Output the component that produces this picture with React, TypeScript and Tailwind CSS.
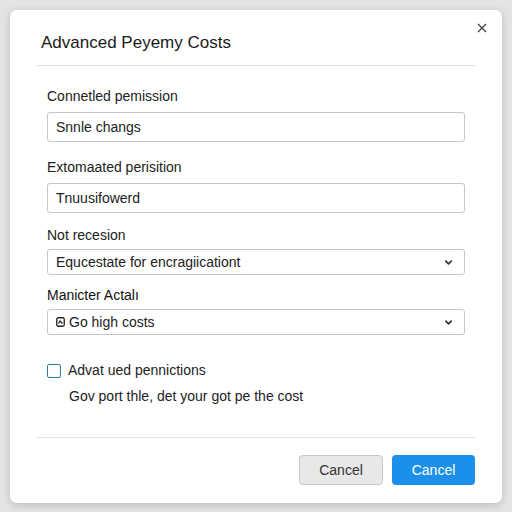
import { ChevronDown } from 'lucide-react'

function Label({ children, strong }: { children: string; strong?: boolean }) {
  return (
    <div className={`text-[14px] leading-[20px] ${strong ? 'text-[#111]' : 'text-[#222]'}`}>{children}</div>
  )
}

function TextBox({ value }: { value: string }) {
  return (
    <div className="h-[30px] border border-[#c6c6c6] rounded-[3px] flex items-center px-[8px] text-[14px] text-[#222] bg-white">
      {value}
    </div>
  )
}

function SelectBox({ value, icon }: { value: string; icon?: boolean }) {
  return (
    <div className="h-[26px] border border-[#c6c6c6] rounded-[3px] flex items-center pl-[8px] pr-[10px] text-[14px] text-[#222] bg-white">
      {icon && (
        <svg width="9" height="10" viewBox="0 0 9 10" className="mr-[4px]">
          <rect x="0.75" y="0.75" width="7.5" height="8.5" rx="1.5" fill="none" stroke="#222" strokeWidth="1.3" />
          <path d="M2.5 6.5 L4 4 L6.5 6.5" fill="none" stroke="#222" strokeWidth="1.2" />
        </svg>
      )}
      <span className="flex-1">{value}</span>
      <ChevronDown className="w-[11px] h-[11px] text-[#333]" strokeWidth={3.5} />
    </div>
  )
}

export default function App() {
  return (
    <div
      className="w-[512px] h-[512px] bg-[#e4e4e4] p-[10px] pb-[9px]"
      style={{ fontFamily: '"Liberation Sans", Arial, sans-serif' }}
    >
      <div className="relative h-full bg-white rounded-[7px] shadow-[0_2px_8px_rgba(0,0,0,0.18)] px-[26px] flex flex-col">
        <button className="absolute top-[13px] right-[15px] text-[#444]">
          <svg width="10" height="10" viewBox="0 0 10 10">
            <path d="M1 1 L9 9 M9 1 L1 9" stroke="#444" strokeWidth="1.4" />
          </svg>
        </button>

        {/* Header */}
        <div className="pt-[21px] pb-[10px] pl-[5px] border-b border-[#e3e3e3]">
          <h1 className="text-[17px] leading-[24px] text-[#1a1a1a]">Advanced Peyemy Costs</h1>
        </div>

        {/* Body */}
        <div className="px-[11px] pt-[20px] flex flex-col">
          <Label>Connetled pemission</Label>
          <div className="mt-[6px]">
            <TextBox value="Snnle changs" />
          </div>

          <div className="mt-[15px]">
            <Label>Extomaated perisition</Label>
          </div>
          <div className="mt-[6px]">
            <TextBox value="Tnuusifowerd" />
          </div>

          <div className="mt-[12px]">
            <Label>Not recesion</Label>
          </div>
          <div className="mt-[4px]">
            <SelectBox value="Equcestate for encragiicationt" />
          </div>

          <div className="mt-[10px]">
            <Label strong>Manicter Actalı</Label>
          </div>
          <div className="mt-[4px]">
            <SelectBox value="Go high costs" icon />
          </div>

          <div className="mt-[25px] flex items-center gap-[7px]">
            <div className="w-[14px] h-[14px] border-[1.5px] border-[#2f7ea6] rounded-[2px]" />
            <span className="text-[14px] text-[#222]">Advat ued pennictions</span>
          </div>
          <div className="mt-[5px] pl-[22px] text-[14px] text-[#222]">Gov port thle, det your got pe the cost</div>
        </div>

        {/* Footer */}
        <div className="mt-auto border-t border-[#e3e3e3] pt-[17px] pb-[18px] flex justify-end gap-[9px] pr-[1px]">
          <button className="w-[84px] h-[30px] rounded-[4px] bg-[#e8e8e8] border border-[#c8c8c8] text-[14px] text-[#333]">
            Cancel
          </button>
          <button className="w-[83px] h-[30px] rounded-[4px] bg-[#1b8fe9] text-[14px] text-white">
            Cancel
          </button>
        </div>
      </div>
    </div>
  )
}
